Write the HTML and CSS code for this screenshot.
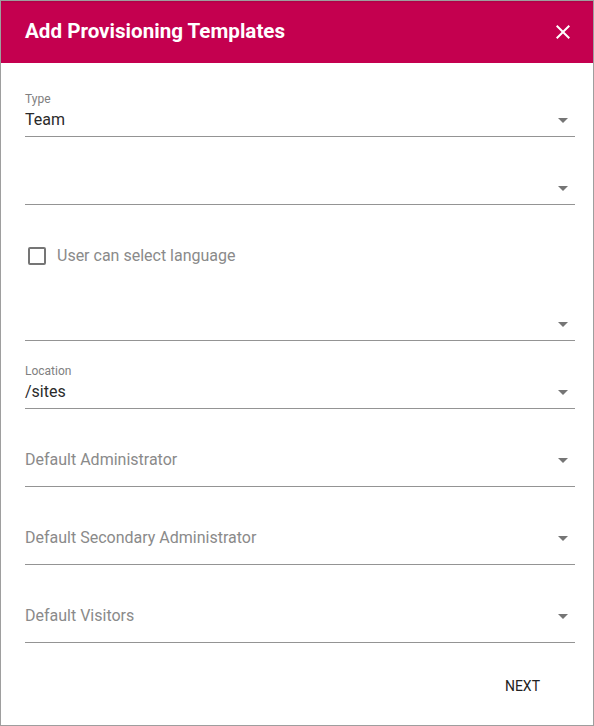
FILE: index.html
```html
<!DOCTYPE html>
<html>
<head>
<meta charset="utf-8">
<link rel="stylesheet" href="styles.css">
</head>
<body>
<div class="dialog">
  <div class="header">
    <h1 class="title">Add Provisioning Templates</h1>
    <svg class="close" width="24" height="24" viewBox="0 0 24 24"><path fill="#fff" d="M19 6.41L17.59 5 12 10.59 6.41 5 5 6.41 10.59 12 5 17.59 6.41 19 12 13.41 17.59 19 19 17.59 13.41 12z"/></svg>
  </div>
  <div class="content">
    <div class="field">
      <div class="label">Type</div>
      <div class="row"><span class="value">Team</span><span class="arrow"></span></div>
    </div>
    <div class="field">
      <div class="label"></div>
      <div class="row"><span class="value"></span><span class="arrow"></span></div>
    </div>
    <div class="check">
      <span class="box"></span>
      <span class="check-text">User can select language</span>
    </div>
    <div class="field">
      <div class="label"></div>
      <div class="row"><span class="value"></span><span class="arrow"></span></div>
    </div>
    <div class="field">
      <div class="label">Location</div>
      <div class="row"><span class="value">/sites</span><span class="arrow"></span></div>
    </div>
    <div class="field tall">
      <div class="row"><span class="placeholder">Default Administrator</span><span class="arrow"></span></div>
    </div>
    <div class="field tall">
      <div class="row"><span class="placeholder">Default Secondary Administrator</span><span class="arrow"></span></div>
    </div>
    <div class="field tall">
      <div class="row"><span class="placeholder">Default Visitors</span><span class="arrow"></span></div>
    </div>
  </div>
  <div class="actions">
    <button class="btn">NEXT</button>
  </div>
</div>
</body>
</html>
```
FILE: styles.css
```css
html, body {
  margin: 0;
  padding: 0;
  background: #fff;
}
body {
  font-family: Roboto, "Liberation Sans", Arial, sans-serif;
}
.dialog {
  width: 594px;
  height: 726px;
  box-sizing: border-box;
  border: 1px solid #9e9e9e;
  display: flex;
  flex-direction: column;
}
.header {
  height: 62px;
  background: #c4004f;
  display: flex;
  align-items: center;
  justify-content: space-between;
  padding: 0 18px 0 24px;
  box-shadow: inset 0 2px 2px -1px rgba(0,0,0,0.12);
}
.title {
  margin: 0;
  color: #fff;
  font-size: 20.6px;
  font-weight: 700;
  letter-spacing: 0;
  padding-bottom: 3px;
}
.close {
  display: block;
}
.content {
  padding: 29px 18px 0 24px;
  display: flex;
  flex-direction: column;
}
.field {
  border-bottom: 1px solid #949494;
  display: flex;
  flex-direction: column;
  margin-bottom: 23px;
}
.label {
  height: 14px;
  font-size: 12px;
  line-height: 14px;
  color: #808080;
  margin-bottom: 4px;
}
.row {
  height: 20px;
  display: flex;
  align-items: center;
  justify-content: space-between;
  padding-bottom: 6px;
}
.value {
  font-size: 16px;
  line-height: 20px;
  color: #2a2a2a;
}
.placeholder {
  font-size: 16px;
  line-height: 20px;
  color: #8a8a8a;
}
.arrow {
  width: 0;
  height: 0;
  border-left: 5px solid transparent;
  border-right: 5px solid transparent;
  border-top: 5px solid #757575;
  margin-right: 7px;
  margin-top: 0;
}
.field.tall {
  padding-top: 18px;
}
.field.tall .row {
  padding-bottom: 16px;
}
.check {
  display: flex;
  align-items: center;
  height: 18px;
  margin-top: 19px;
  margin-bottom: 31px;
  padding-left: 3px;
}
.box {
  width: 18px;
  height: 18px;
  box-sizing: border-box;
  border: 2px solid #757575;
  border-radius: 2px;
  margin-right: 11px;
}
.check-text {
  font-size: 16px;
  color: #8a8a8a;
  line-height: 20px;
}
.actions {
  display: flex;
  justify-content: flex-end;
  padding: 2px 37px 0 0;
}
.btn {
  background: none;
  border: none;
  height: 36px;
  padding: 0 16px;
  font-family: Roboto, "Liberation Sans", Arial, sans-serif;
  font-size: 14px;
  font-weight: 400;
  color: #222;
}
```
